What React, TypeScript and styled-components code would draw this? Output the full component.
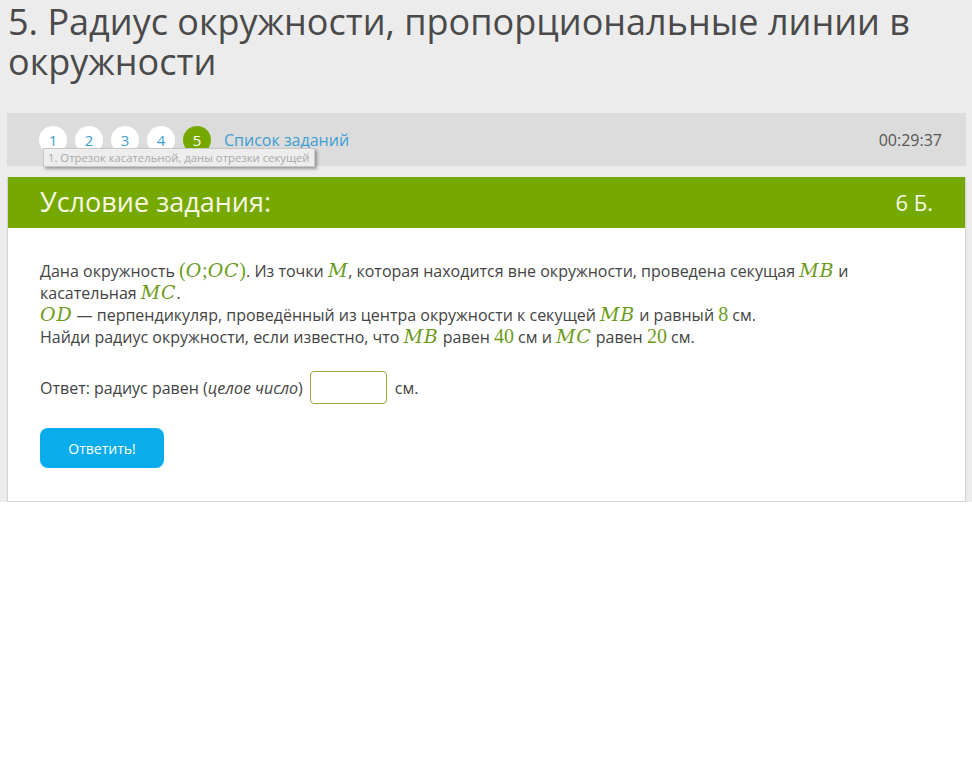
import styled, { createGlobalStyle } from "styled-components";

const GlobalStyle = createGlobalStyle`
  html, body {
    margin: 0;
    padding: 0;
    background: #ffffff;
    font-family: "Open Sans", "Noto Sans", sans-serif;
    color: #444444;
  }
`;

const tasks = [1, 2, 3, 4, 5];
const activeTask = 5;

const App = () => {
  return (
    <>
      <GlobalStyle />
      <PageWrapper>
        <PageTitle>5. Радиус окружности, пропорциональные линии в окружности</PageTitle>
        <NavBar>
          <TaskList>
            {tasks.map((n) => (
              <TaskCircle key={n} $active={n === activeTask}>
                {n}
              </TaskCircle>
            ))}
            <TaskLink>Список заданий</TaskLink>
          </TaskList>
          <Timer>00:29:37</Timer>
          <Tooltip>1. Отрезок касательной, даны отрезки секущей</Tooltip>
        </NavBar>
        <Card>
          <CardHeader>
            <CardTitle>Условие задания:</CardTitle>
            <Points>6 Б.</Points>
          </CardHeader>
          <CardBody>
            <Statement>
              Дана окружность <MathUp>(</MathUp>
              <MathVar>O</MathVar>
              <MathUp>;</MathUp>
              <MathVar>OC</MathVar>
              <MathUp>)</MathUp>. Из точки <MathVar>M</MathVar>, которая находится вне
              окружности, проведена секущая <MathVar>MB</MathVar> и касательная{" "}
              <MathVar>MC</MathVar>.
              <br />
              <MathVar>OD</MathVar> — перпендикуляр, проведённый из центра окружности к
              секущей <MathVar>MB</MathVar> и равный <MathUp>8</MathUp> см.
              <br />
              Найди радиус окружности, если известно, что <MathVar>MB</MathVar> равен{" "}
              <MathUp>40</MathUp> см и <MathVar>MC</MathVar> равен <MathUp>20</MathUp> см.
            </Statement>
            <AnswerRow>
              <span>
                Ответ: радиус равен (<em>целое число</em>)
              </span>
              <AnswerInput type="text" />
              <span>см.</span>
            </AnswerRow>
            <SubmitButton>Ответить!</SubmitButton>
          </CardBody>
        </Card>
      </PageWrapper>
    </>
  );
};

const PageWrapper = styled.div`
  background: #ececec;
  padding: 0 6px 0 7px;
`;

const PageTitle = styled.h1`
  margin: 0;
  padding: 2px 0 0 1px;
  font-size: 36px;
  line-height: 40px;
  font-weight: 400;
  color: #4a4a4a;
`;

const NavBar = styled.div`
  position: relative;
  margin-top: 31px;
  height: 53px;
  background: #dcdcdc;
  display: flex;
  align-items: center;
  justify-content: space-between;
  padding: 0 24px 0 32px;
`;

const TaskList = styled.div`
  display: flex;
  align-items: center;
  gap: 8px;
`;

const TaskCircle = styled.span<{ $active?: boolean }>`
  width: 28px;
  height: 28px;
  border-radius: 50%;
  display: flex;
  align-items: center;
  justify-content: center;
  font-size: 15px;
  background: ${({ $active }) => ($active ? "#76a900" : "#ffffff")};
  color: ${({ $active }) => ($active ? "#ffffff" : "#3d9ed4")};
`;

const TaskLink = styled.span`
  margin-left: 5px;
  font-size: 16px;
  color: #3d9ed4;
`;

const Timer = styled.span`
  font-size: 16px;
  color: #555555;
`;

const Tooltip = styled.div`
  position: absolute;
  left: 36px;
  top: 35px;
  padding: 0 4px;
  height: 17px;
  line-height: 17px;
  font-size: 11.3px;
  color: #a9a9a9;
  background: #ededed;
  border: 1px solid #c8c8c8;
  box-shadow: 2px 2px 3px rgba(0, 0, 0, 0.35);
  white-space: nowrap;
`;

const Card = styled.div`
  margin-top: 11px;
  background: #ffffff;
  border: 1px solid #d4d4d4;
  border-top: none;
  box-shadow: 0 1px 1px rgba(0, 0, 0, 0.08);
`;

const CardHeader = styled.div`
  height: 51px;
  background: #76a900;
  display: flex;
  align-items: center;
  justify-content: space-between;
  padding: 0 32px 2px 32px;
  box-sizing: border-box;
`;

const CardTitle = styled.h2`
  margin: 0;
  font-size: 27px;
  font-weight: 400;
  color: #f6f8e4;
`;

const Points = styled.span`
  font-size: 22px;
  color: #f6f8e4;
`;

const CardBody = styled.div`
  padding: 32px 32px 33px 32px;
`;

const Statement = styled.p`
  margin: 0;
  font-size: 16px;
  line-height: 22px;
  color: #444444;
`;

const MathVar = styled.span`
  font-family: "DejaVu Serif", "Liberation Serif", serif;
  font-style: italic;
  font-size: 19px;
  line-height: 16px;
  letter-spacing: 0.8px;
  color: #6d9c1c;
`;

const MathUp = styled.span`
  font-family: "Liberation Serif", "DejaVu Serif", serif;
  font-size: 20px;
  line-height: 16px;
  color: #6d9c1c;
`;

const AnswerRow = styled.div`
  margin-top: 23px;
  display: flex;
  align-items: center;
  gap: 7px;
  font-size: 16px;
  color: #444444;

  em {
    font-style: italic;
  }
`;

const AnswerInput = styled.input`
  box-sizing: border-box;
  width: 77px;
  height: 33px;
  margin-right: 1px;
  border: 1px solid #8fae3c;
  border-radius: 4px;
  background: #ffffff;
  outline: none;
`;

const SubmitButton = styled.button`
  margin-top: 24px;
  width: 124px;
  height: 40px;
  border: none;
  border-radius: 8px;
  background: #0aacec;
  color: #ffffff;
  font-family: "Open Sans", "Noto Sans", sans-serif;
  font-size: 14px;
  cursor: pointer;
`;

export default App;
